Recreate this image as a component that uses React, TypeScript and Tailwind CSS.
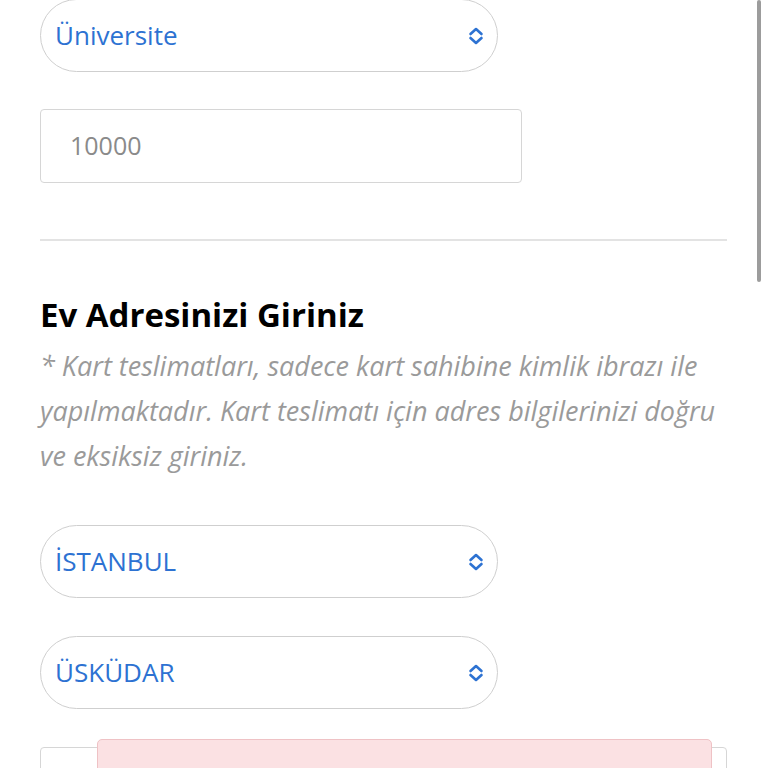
import React from "react";

function Chevron() {
  return (
    <svg width="16" height="18" viewBox="0 0 16 18" fill="none" className="shrink-0">
      <path d="M2.5 7 L8 2 L13.5 7" stroke="#2d72d2" strokeWidth="2.6" strokeLinecap="round" strokeLinejoin="round" />
      <path d="M2.5 11 L8 16 L13.5 11" stroke="#2d72d2" strokeWidth="2.6" strokeLinecap="round" strokeLinejoin="round" />
    </svg>
  );
}

function Select({ label, className = "" }: { label: string; className?: string }) {
  return (
    <div
      className={`w-[458px] h-[73px] rounded-full border border-[#cfcfcf] flex items-center justify-between pl-[14px] pr-[13px] ${className}`}
    >
      <span className="text-[26px] leading-[36px] text-[#2d72d2] -mt-[1px]">{label}</span>
      <Chevron />
    </div>
  );
}

export default function App() {
  return (
    <div
      className="relative w-full h-[768px] overflow-hidden bg-white"
      style={{ fontFamily: '"Open Sans", "Noto Sans", sans-serif' }}
    >
      <div className="pl-[40px] pr-[41px] flex flex-col">
        <Select label="Üniversite" className="-mt-[1px]" />
        <div className="mt-[37px] w-[482px] h-[74px] rounded-[4px] border border-[#d6d6d6] flex items-center pl-[29px]">
          <span className="text-[25px] text-[#8a8a8a]">10000</span>
        </div>
        <div className="mt-[56px] h-[2px] bg-[#e3e3e3]" />
        <h2 className="mt-[54px] text-[33px] leading-[40px] font-bold text-black">Ev Adresinizi Giriniz</h2>
        <p className="mt-[8px] text-[27px] leading-[45px] italic text-[#9a9a9a]">
          * Kart teslimatları, sadece kart sahibine kimlik ibrazı ile yapılmaktadır. Kart teslimatı için adres bilgilerinizi doğru ve eksiksiz giriniz.
        </p>
        <Select label="İSTANBUL" className="mt-[47px]" />
        <Select label="ÜSKÜDAR" className="mt-[38px]" />
        <div className="mt-[38px] h-[74px] rounded-[4px] border border-[#d6d6d6]" />
      </div>
      <div className="absolute left-[97px] top-[739px] w-[615px] h-[60px] rounded-[5px] bg-[#fbe1e3] border border-[#efc2c5]" />
      <div className="absolute left-[757px] top-0 w-[4px] h-[282px] rounded-full bg-[#9c9c9c]" />
    </div>
  );
}
